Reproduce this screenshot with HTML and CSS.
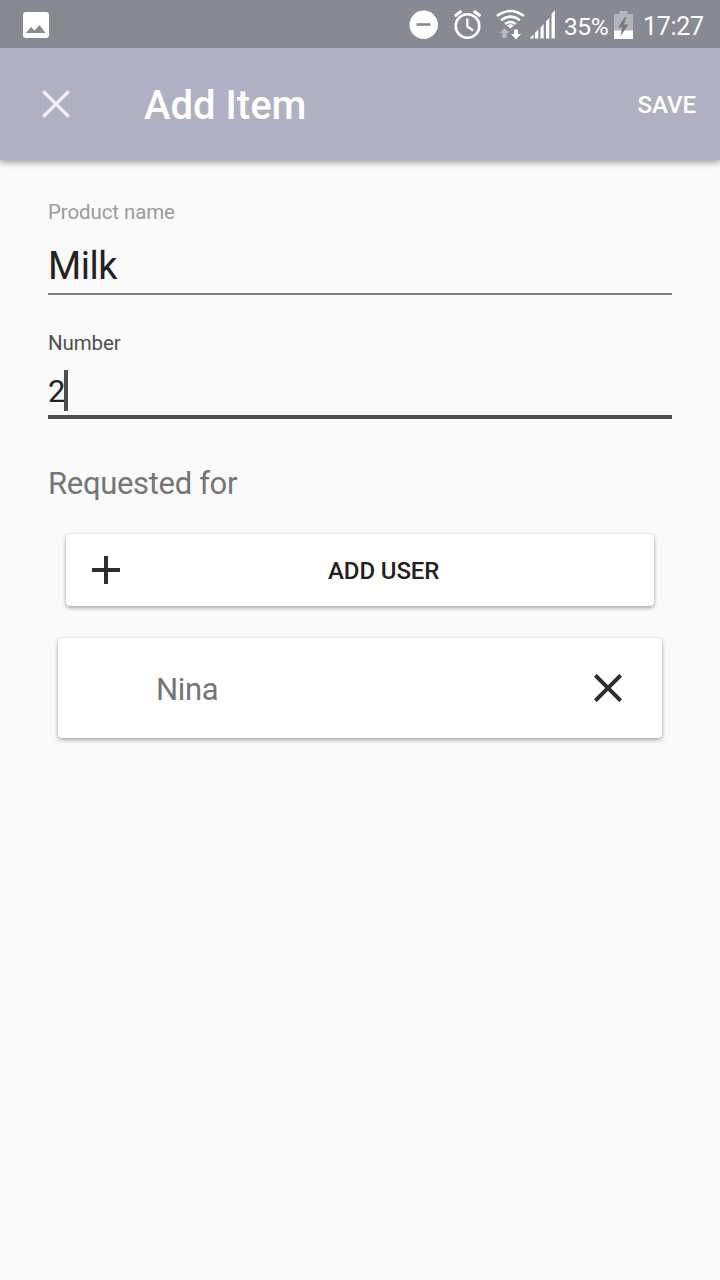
FILE: index.html
```html
<!DOCTYPE html>
<html lang="en">
<head>
<meta charset="utf-8">
<title>Add Item</title>
<link rel="stylesheet" href="styles.css">
</head>
<body>
<div class="status">
  <svg class="picture" width="26" height="26" viewBox="0 0 26 26"><path fill="#fff" fill-rule="evenodd" d="M3 0H23Q26 0 26 3V23Q26 26 23 26H3Q0 26 0 23V3Q0 0 3 0ZM3 21H22.500L16.500 13L11.500 18.500L8 15Z"/></svg>
  <svg class="dnd" width="30" height="30" viewBox="0 0 30 30"><circle cx="14.700" cy="14.800" r="14.200" fill="#fff"/><path d="M7.500 14.500H21.500" stroke="#878a93" stroke-width="2.600"/></svg>
  <svg class="alarm" width="28" height="30" viewBox="0 0 28 30"><g fill="none" stroke="#fff"><circle cx="13.500" cy="17" r="11.800" stroke-width="2.600"/><path d="M13.300 9.500V17.500L19 21.500" stroke-width="2.300"/><path d="M.8 7L7.500 2M19.700 2L26.400 7" stroke-width="3"/></g></svg>
  <svg class="wifi" width="30" height="32" viewBox="0 0 30 32"><g fill="none" stroke="#fff" stroke-width="2.600"><path d="M.9 7Q14.400 -3 27.900 7"/><path d="M5 11.200Q14.400 4 23.800 11.200"/><path d="M9 15Q14.400 11 19.800 15"/></g><path fill="#fff" d="M11 16.500Q14.400 14 17.800 16.500L14.400 19.500ZM18 20.500H22V25H25L20 30.500L15 25H18Z"/><path fill="#b9bbc0" d="M8.500 19L13.200 24H10.700V29H6.500V24H3.700Z"/></svg>
  <svg class="signal" width="26" height="30" viewBox="0 0 26 30"><path fill="#fff" d="M-.5 29.500L3.500 25.500V29.500ZM5 23.800L8.300 20.500V29.500H5ZM10.500 18.500L13.700 15V29.500H10.500ZM16 12.500L19.300 9V29.500H16ZM21.500 5L24.800 1V29.500H21.500Z"/></svg>
  <span class="percent">35%</span>
  <svg class="battery" width="19" height="30" viewBox="0 0 19 30"><path fill="#b3b5b9" d="M5.500 1H13.500V4H19V29H0V4H5.500Z"/><path fill="#fff" d="M0 20.500H19V29H0Z"/><path fill="#777a80" d="M10.500 7.500L4 17.500H8.200L6.500 26L14.500 14.500H9.800L12.500 7.500Z"/></svg>
  <span class="clock">17:27</span>
</div>
<header class="appbar">
  <svg class="close" width="28" height="28" viewBox="0 0 28 28"><path d="M1.200 1.200L26.800 26.800M26.800 1.200L1.200 26.800" stroke="#eef0f6" stroke-width="3.400"/></svg>
  <h1 class="title">Add Item</h1>
  <span class="save">SAVE</span>
</header>
<main class="form">
  <div class="label label-name">Product name</div>
  <div class="input input-name">Milk</div>
  <div class="label label-number">Number</div>
  <div class="input input-number">2<span class="caret"></span></div>
  <h2 class="section">Requested for</h2>
  <div class="card add-user">
    <svg width="28" height="28" viewBox="0 0 28 28"><path d="M14 0V28M0 14H28" stroke="#2c2c2c" stroke-width="4"/></svg>
    <span class="add-text">ADD USER</span>
  </div>
  <div class="card user">
    <span class="user-name">Nina</span>
    <svg width="28" height="28" viewBox="0 0 28 28"><path d="M1.400 1.400L26.600 26.600M26.600 1.400L1.400 26.600" stroke="#2c2c2c" stroke-width="4"/></svg>
  </div>
</main>
</body>
</html>
```
FILE: styles.css
```css
* { box-sizing: border-box; }
body { margin: 0; min-height: 1280px; background: #fafafa; font-family: Roboto, sans-serif; color: #212121; }
svg { display: block; flex: none; }
h1, h2 { margin: 0; }
.status { position: relative; z-index: 1; display: flex; align-items: flex-start; height: 48px; padding-left: 23px; background: #878a93; color: #fff; white-space: nowrap; }
.picture { margin-top: 12px; }
.dnd { margin: 10px 0 0 360px; }
.alarm { margin: 9px 0 0 15px; }
.wifi { margin: 9px 0 0 14px; }
.signal { margin: 9px 0 0 4px; }
.percent { width: 50px; margin-left: 8px; font-size: 24.5px; line-height: 53px; letter-spacing: -.4px; }
.battery { margin-top: 10px; }
.clock { margin-left: 10px; font-size: 25px; line-height: 53px; letter-spacing: -.3px; }
.appbar { display: flex; align-items: center; height: 112px; padding: 0 24px 0 42px; background: #aeb1c1; color: #fff; box-shadow: 0 2px 7px rgba(0, 0, 0, .42); }
.title { margin-left: 74px; padding-top: 4px; font-size: 40px; font-weight: 500; line-height: 48px; }
.save { margin-left: auto; padding-top: 2px; font-size: 24px; font-weight: 500; line-height: 28px; }
.form { padding: 38px 48px 0; }
.label { font-size: 20.5px; line-height: 28px; letter-spacing: -.1px; }
.label-name { color: #9a9a9a; }
.label-number { margin-top: 34px; color: #505050; }
.input { display: flex; align-items: center; }
.input-name { height: 69px; padding-top: 13px; border-bottom: 2px solid #808080; font-size: 38px; letter-spacing: -.5px; }
.input-number { height: 62px; padding-top: 11px; border-bottom: 4px solid #4e4e4e; font-size: 31px; }
.caret { width: 4px; height: 41px; margin: -3px 0 0 -1.5px; background: #4e4e4e; }
.section { margin-top: 46px; font-size: 31px; font-weight: 400; line-height: 38px; letter-spacing: -.33px; color: #757575; }
.card { display: flex; align-items: center; background: #fff; border-radius: 4px; box-shadow: 0 2px 4px rgba(0, 0, 0, .32), 0 0 2px rgba(0, 0, 0, .12); }
.add-user { height: 72px; margin: 31px 18px 0; padding: 0 26px; }
.add-text { margin-left: 208px; padding-top: 2px; font-size: 24px; font-weight: 500; letter-spacing: -.1px; }
.user { height: 100px; margin: 32px 10px 0; padding: 0 40px 0 98px; }
.user-name { flex: 1; padding-top: 2px; font-size: 31px; letter-spacing: -.3px; color: #757575; }
```
